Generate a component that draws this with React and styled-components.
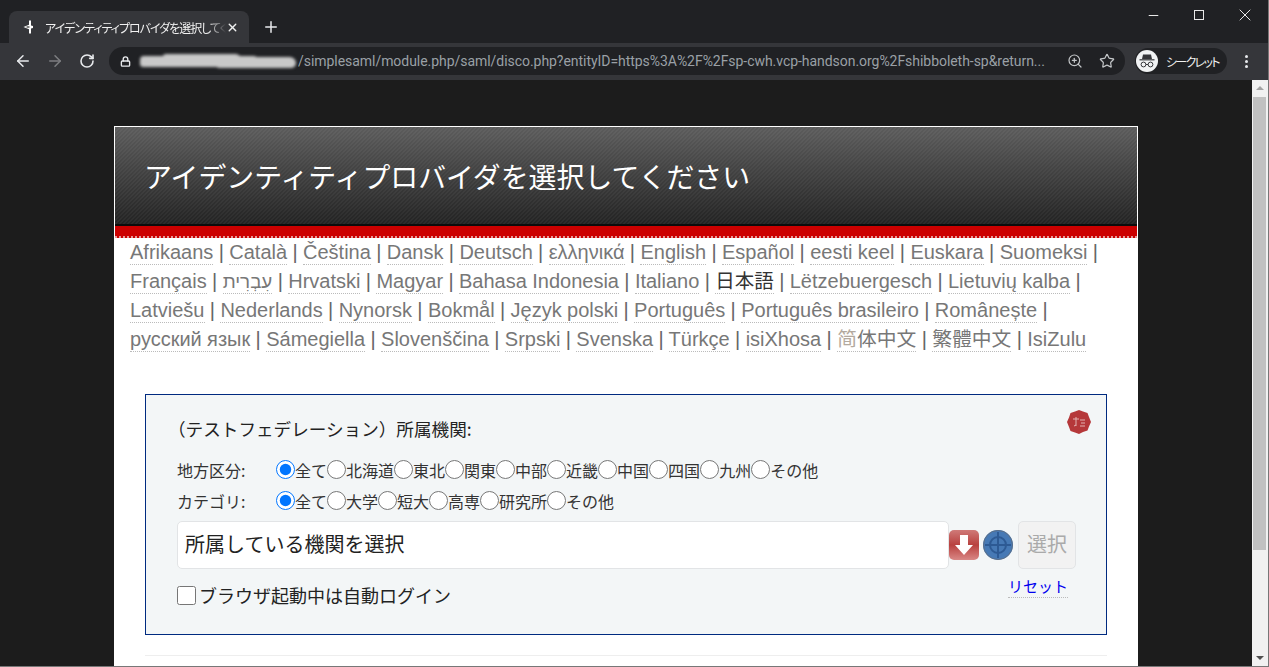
import React from "react"
import styled, { createGlobalStyle } from "styled-components"
import { ArrowLeft, ArrowRight, RotateCw, Lock, ZoomIn, Star, Plus, X, Minus } from "lucide-react"

const GlobalStyle = createGlobalStyle`
  html, body {
    margin: 0;
    height: 100%;
    overflow: hidden;
    background: #1c1c1c;
  }
`

const JP = `"Noto Sans CJK JP", "Liberation Sans", sans-serif`

const Window = styled.div`
  height: 667px;
  display: flex;
  flex-direction: column;
  box-sizing: border-box;
  border-right: 1px solid #777;
  border-bottom: 1px solid #777;
  overflow: hidden;
`

const TabStrip = styled.div`
  height: 43px;
  flex: none;
  background: #202124;
  display: flex;
  align-items: flex-end;
  padding-left: 9px;
  position: relative;
`

const Tab = styled.div`
  width: 240px;
  height: 32px;
  background: #35363a;
  border-radius: 8px 8px 0 0;
  display: flex;
  align-items: center;
  padding: 0 10px 0 11px;
  box-sizing: border-box;
  color: #f1f1f1;
`

const TabTitle = styled.span`
  font: 12px ${JP};
  font-feature-settings: "palt";
  margin-left: 9px;
  width: 181px;
  white-space: nowrap;
  overflow: hidden;
  letter-spacing: -1px;
  -webkit-mask-image: linear-gradient(90deg, #000 90%, transparent);
  mask-image: linear-gradient(90deg, #000 90%, transparent);
`

const NewTab = styled.div`
  color: #e8eaed;
  display: flex;
  align-items: center;
  margin: 0 0 7px 13px;
`

const WindowControls = styled.div`
  margin-left: auto;
  align-self: flex-start;
  display: flex;
  color: #e8e8e8;
`

const WindowButton = styled.div`
  width: 46px;
  height: 30px;
  display: flex;
  align-items: center;
  justify-content: center;
`

const MaxBox = styled.div`
  width: 10px;
  height: 10px;
  box-sizing: border-box;
  border: 1px solid #e8e8e8;
`

const Toolbar = styled.div`
  height: 37px;
  flex: none;
  background: #35363a;
  display: flex;
  align-items: center;
  box-sizing: border-box;
  padding: 0 0 1px 7px;
`

const NavButton = styled.div`
  width: 32px;
  display: flex;
  justify-content: center;
  color: ${(p) => (p.$off ? "#7d7e81" : "#e8eaed")};
`

const Omnibox = styled.div`
  width: 1016px;
  height: 28px;
  margin-left: 6px;
  flex: none;
  box-sizing: border-box;
  background: #202124;
  border-radius: 14px;
  display: flex;
  align-items: center;
  padding: 0 10px 0 11px;
  color: #e8eaed;
`

const Blot = styled.div`
  width: 80px;
  height: 11px;
  margin: 0 78px 0 9px;
  flex: none;
  background: #c9c9c9;
  border-radius: 5px 8px 6px 4px;
  filter: blur(1.5px);
  box-shadow: 76px 1px 0 0 #c9c9c9, 22px -3px 0 -1px #c9c9c9, 40px -3px 0 -3px #c9c9c9, 60px 2px 0 -2px #c9c9c9;
`

const Url = styled.span`
  font: 14px Roboto, "Liberation Sans", sans-serif;
  color: #9aa0a6;
  white-space: nowrap;
  flex: 1;
  overflow: hidden;
  letter-spacing: -0.045px;
`

const OmniIcon = styled.div`
  display: flex;
  margin-left: 16px;
  color: #c4c7c9;
`

const Profile = styled.div`
  width: 92px;
  height: 26px;
  margin-left: 10px;
  background: #202124;
  border-radius: 13px;
  display: flex;
  align-items: center;
  color: #f1f1f1;
  font: 12px ${JP};
  font-feature-settings: "palt";
  letter-spacing: -1.7px;
  white-space: nowrap;
`

const ProfileBadge = styled.div`
  width: 22px;
  height: 22px;
  flex: none;
  border-radius: 50%;
  background: #f1f3f4;
  margin: 0 8px 0 1px;
  display: flex;
  align-items: center;
  justify-content: center;
`

const Kebab = styled.div`
  margin-left: 18px;
  display: flex;
  flex-direction: column;
  gap: 2px;
`

const Dot = styled.i`
  width: 3px;
  height: 3px;
  border-radius: 50%;
  background: #e8eaed;
`

const Viewport = styled.div`
  flex: 1;
  min-height: 0;
  display: flex;
`

const PageArea = styled.div`
  flex: 1;
  padding: 46px 114px 0;
  overflow: hidden;
  background: #1c1c1c;
`

const Scrollbar = styled.div`
  width: 16px;
  flex: none;
  background: #f1f1f1;
  display: flex;
  flex-direction: column;
  align-items: center;
  justify-content: space-between;
  position: relative;
  box-sizing: border-box;
  padding: 6px 0;
`

const ScrollThumb = styled.div`
  position: absolute;
  top: 17px;
  left: 1px;
  width: 13px;
  height: 453px;
  background: #c1c1c1;
`

const ScrollArrow = styled.div`
  width: 0;
  height: 0;
  border-left: 4px solid transparent;
  border-right: 4px solid transparent;
  ${(p) => (p.$down ? "border-top: 4px solid #505050;" : "border-bottom: 4px solid #a3a3a3;")}
`

const Card = styled.div`
  background: #fff;
  border: 1px solid #fff;
  border-bottom: 0;
  height: 600px;
`

const Header = styled.div`
  height: 99px;
  box-sizing: border-box;
  border-bottom: 2px solid #0c0c0c;
  padding-left: 29px;
  display: flex;
  align-items: center;
  background-image:
    linear-gradient(135deg, rgba(255, 255, 255, 0.04) 25%, transparent 25%, transparent 50%, rgba(255, 255, 255, 0.04) 50%, rgba(255, 255, 255, 0.04) 75%, transparent 75%),
    linear-gradient(#5c5c5c, #232323);
  background-size: 4px 4px, 100% 100%;
`

const Title = styled.h1`
  margin: 0;
  font: 400 27.9px ${JP};
  color: #fff;
`

const RedBar = styled.div`
  height: 10px;
  background: #cc0000;
  border-bottom: 2px dotted #e59a9a;
  box-sizing: content-box;
`

const Languages = styled.div`
  padding: 0 15px;
  font: 20px/28.6px "Liberation Sans", ${JP};
  color: #666;
  word-spacing: -0.2px;
`

const LangLink = styled.a`
  color: ${(p) => p.$color || "#777"};
  font-size: ${(p) => p.$size || 20}px;
  text-decoration: none;
  border-bottom: 1px dotted #bbb;
  padding-bottom: 1px;
`

const FaintGlyph = styled.span`
  color: #b3a99e;
`

const Body = styled.div`
  padding: 41px 30px 0;
`

const Panel = styled.div`
  height: 241px;
  box-sizing: border-box;
  background: #f3f6f7;
  border: 1px solid #002a80;
  padding: 20px 30px 0 31px;
  position: relative;
  font-family: ${JP};
  color: #333;
`

const Stamp = styled.svg`
  position: absolute;
  top: 15px;
  right: 15px;
`

const PanelTitle = styled.div`
  font-size: 17.6px;
  line-height: 28px;
  color: #222;
  margin: 0 0 11px -9px;
`

const FilterRow = styled.div`
  display: flex;
  align-items: center;
  height: 31px;
  font-size: 16px;
`

const FilterLabel = styled.span`
  width: 99px;
  flex: none;
`

const Radio = styled.input.attrs({ type: "radio" })`
  width: 19px;
  height: 19px;
  margin: 0;
`

const SearchRow = styled.div`
  display: flex;
  align-items: center;
  margin-top: 5px;
`

const SearchBox = styled.div`
  width: 773px;
  height: 48px;
  box-sizing: border-box;
  background: #fff;
  border: 1px solid #e2e4e6;
  border-radius: 5px;
  padding: 0 0 3px 7px;
  display: flex;
  align-items: center;
  font-size: 20px;
  color: #222;
`

const IconSlot = styled.div`
  display: flex;
  margin-left: ${(p) => p.$gap}px;
`

const SelectButton = styled.div`
  width: 58px;
  height: 48px;
  box-sizing: border-box;
  margin-left: 5px;
  padding-bottom: 3px;
  background: #f2f2f2;
  border: 1px solid #e2e4e6;
  border-radius: 5px;
  display: flex;
  align-items: center;
  justify-content: center;
  font-size: 20px;
  color: #aaa;
`

const BottomRow = styled.div`
  display: flex;
  justify-content: space-between;
  align-items: flex-start;
  margin-top: 5px;
`

const AutoLogin = styled.label`
  display: flex;
  align-items: center;
  font-size: 18px;
  color: #222;
  margin-top: 8px;
`

const Check = styled.input.attrs({ type: "checkbox" })`
  width: 19px;
  height: 19px;
  margin: 0 3px 0 0;
`

const ResetLink = styled.a`
  font-size: 15px;
  line-height: 22px;
  color: #0000ee;
  border-bottom: 1px dotted #bbb;
  margin: 1px 8px 0 0;
  text-decoration: none;
`

const Divider = styled.hr`
  border: 0;
  border-top: 1px solid #eee;
  margin: 20px 0 0;
`

const languages = [
  { name: "Afrikaans" }, { name: "Català" }, { name: "Čeština" }, { name: "Dansk" }, { name: "Deutsch" },
  { name: "ελληνικά" }, { name: "English" }, { name: "Español" }, { name: "eesti keel" }, { name: "Euskara" },
  { name: "Suomeksi" }, { name: "Français" }, { name: "עִבְרִית", size: 18.8 }, { name: "Hrvatski" }, { name: "Magyar" },
  { name: "Bahasa Indonesia" }, { name: "Italiano" }, { name: "日本語", size: 19.5, color: "#333" },
  { name: "Lëtzebuergesch" }, { name: "Lietuvių kalba" }, { name: "Latviešu" }, { name: "Nederlands" },
  { name: "Nynorsk" }, { name: "Bokmål" }, { name: "Język polski" }, { name: "Português" },
  { name: "Português brasileiro" }, { name: "Românește" }, { name: "русский язык" }, { name: "Sámegiella" },
  { name: "Slovenščina" }, { name: "Srpski" }, { name: "Svenska" }, { name: "Türkçe" }, { name: "isiXhosa" },
  { name: "简体中文", size: 19.8, faint: 1 }, { name: "繁體中文", size: 19.8 }, { name: "IsiZulu" },
]

const regions = ["全て", "北海道", "東北", "関東", "中部", "近畿", "中国", "四国", "九州", "その他"]
const categories = ["全て", "大学", "短大", "高専", "研究所", "その他"]

const Favicon = () => (
  <svg width="16" height="16" viewBox="0 0 16 16">
    <path d="M9 1.500v4.300L3.500 8 9 10.200v4.300h2V9.500L13 9V7l-2-.5v-5z" fill="#fff" />
    <path d="M6.500 7.500h3v1h-3z" fill="#000" />
  </svg>
)

const IncognitoIcon = () => (
  <svg width="18" height="18" viewBox="0 0 18 18" fill="none">
    <path d="M5 2.500h8l1 4.500H4z" fill="#35363a" />
    <path d="M1.500 7.800h15" stroke="#35363a" strokeWidth="1.200" />
    <circle cx="5.500" cy="12.500" r="2.400" stroke="#35363a" strokeWidth="1" />
    <circle cx="12.500" cy="12.500" r="2.400" stroke="#35363a" strokeWidth="1" />
    <path d="M7.900 12.500h2.200" stroke="#35363a" strokeWidth="1" />
  </svg>
)

const DownButton = () => (
  <svg width="30" height="30" viewBox="0 0 30 30">
    <defs>
      <linearGradient id="dl" x1="0" y1="0" x2="0" y2="1">
        <stop offset="0" stopColor="#cf7a78" />
        <stop offset="0.5" stopColor="#b9413f" />
        <stop offset="1" stopColor="#d98886" />
      </linearGradient>
    </defs>
    <rect width="30" height="30" rx="5" fill="url(#dl)" />
    <path d="M11 5h8v10h5L15 25 6 15h5z" fill="#fff" />
  </svg>
)

const TargetButton = () => (
  <svg width="30" height="30" viewBox="0 0 30 30" fill="none">
    <circle cx="15" cy="15" r="15" fill="#4679b5" />
    <circle cx="15" cy="15" r="8" stroke="#2d5a94" strokeWidth="2" />
    <path d="M15 2v26M2 15h26" stroke="#2d5a94" strokeWidth="2" />
    <circle cx="15" cy="15" r="14.500" stroke="#5d6f86" />
  </svg>
)

const SealIcon = () => (
  <Stamp width="24" height="24" viewBox="0 0 24 24">
    <path
      d="M12 0l4 1.500 4.500 1.500 1.500 4 2 5-2 4.500-1.500 4-4.500 1.500-4 2-4-1.500-4.500-1.500L2 17l-2-5 2-4.500L3.500 3 8 1.500z"
      fill="#b5383a"
    />
    <path d="M6 9h6M9 7v9M7 16l2-1M13 10h5M14 13h4M13 16h5" stroke="#e2b1b0" strokeWidth="1" fill="none" />
  </Stamp>
)

function RadioGroup({ name, items }) {
  return items.map((item, i) => (
    <React.Fragment key={item}>
      <Radio name={name} defaultChecked={i === 0} />
      {item}
    </React.Fragment>
  ))
}

export default function App() {
  return (
    <Window>
      <GlobalStyle />
      <TabStrip>
        <Tab>
          <Favicon />
          <TabTitle>アイデンティティプロバイダを選択してください</TabTitle>
          <X size={13} strokeWidth={2.5} />
        </Tab>
        <NewTab>
          <Plus size={18} strokeWidth={2} />
        </NewTab>
        <WindowControls>
          <WindowButton>
            <Minus size={15} strokeWidth={1} absoluteStrokeWidth />
          </WindowButton>
          <WindowButton>
            <MaxBox />
          </WindowButton>
          <WindowButton>
            <X size={20} strokeWidth={1} absoluteStrokeWidth />
          </WindowButton>
        </WindowControls>
      </TabStrip>

      <Toolbar>
        <NavButton>
          <ArrowLeft size={18} strokeWidth={2} />
        </NavButton>
        <NavButton $off>
          <ArrowRight size={18} strokeWidth={2} />
        </NavButton>
        <NavButton>
          <RotateCw size={16} strokeWidth={2.4} />
        </NavButton>
        <Omnibox>
          <Lock size={11} strokeWidth={3} />
          <Blot />
          <Url>/simplesaml/module.php/saml/disco.php?entityID=https%3A%2F%2Fsp-cwh.vcp-handson.org%2Fshibboleth-sp&return...</Url>
          <OmniIcon>
            <ZoomIn size={16} strokeWidth={1.8} />
          </OmniIcon>
          <OmniIcon>
            <Star size={16} strokeWidth={1.8} />
          </OmniIcon>
        </Omnibox>
        <Profile>
          <ProfileBadge>
            <IncognitoIcon />
          </ProfileBadge>
          シークレット
        </Profile>
        <Kebab>
          <Dot />
          <Dot />
          <Dot />
        </Kebab>
      </Toolbar>

      <Viewport>
        <PageArea>
          <Card>
            <Header>
              <Title>アイデンティティプロバイダを選択してください</Title>
            </Header>
            <RedBar />
            <Languages>
              {languages.map((lang, i) => (
                <React.Fragment key={lang.name}>
                  <LangLink href="#" $size={lang.size} $color={lang.color}>
                    {lang.faint ? (
                      <>
                        <FaintGlyph>{lang.name[0]}</FaintGlyph>
                        {lang.name.slice(1)}
                      </>
                    ) : (
                      lang.name
                    )}
                  </LangLink>
                  {i < languages.length - 1 && " | "}
                </React.Fragment>
              ))}
            </Languages>
            <Body>
              <Panel>
                <SealIcon />
                <PanelTitle>（テストフェデレーション）所属機関:</PanelTitle>
                <FilterRow>
                  <FilterLabel>地方区分:</FilterLabel>
                  <RadioGroup name="region" items={regions} />
                </FilterRow>
                <FilterRow>
                  <FilterLabel>カテゴリ:</FilterLabel>
                  <RadioGroup name="category" items={categories} />
                </FilterRow>
                <SearchRow>
                  <SearchBox>所属している機関を選択</SearchBox>
                  <IconSlot $gap={0}>
                    <DownButton />
                  </IconSlot>
                  <IconSlot $gap={4}>
                    <TargetButton />
                  </IconSlot>
                  <SelectButton>選択</SelectButton>
                </SearchRow>
                <BottomRow>
                  <AutoLogin>
                    <Check />
                    ブラウザ起動中は自動ログイン
                  </AutoLogin>
                  <ResetLink href="#">リセット</ResetLink>
                </BottomRow>
              </Panel>
              <Divider />
            </Body>
          </Card>
        </PageArea>
        <Scrollbar>
          <ScrollArrow />
          <ScrollThumb />
          <ScrollArrow $down />
        </Scrollbar>
      </Viewport>
    </Window>
  )
}
